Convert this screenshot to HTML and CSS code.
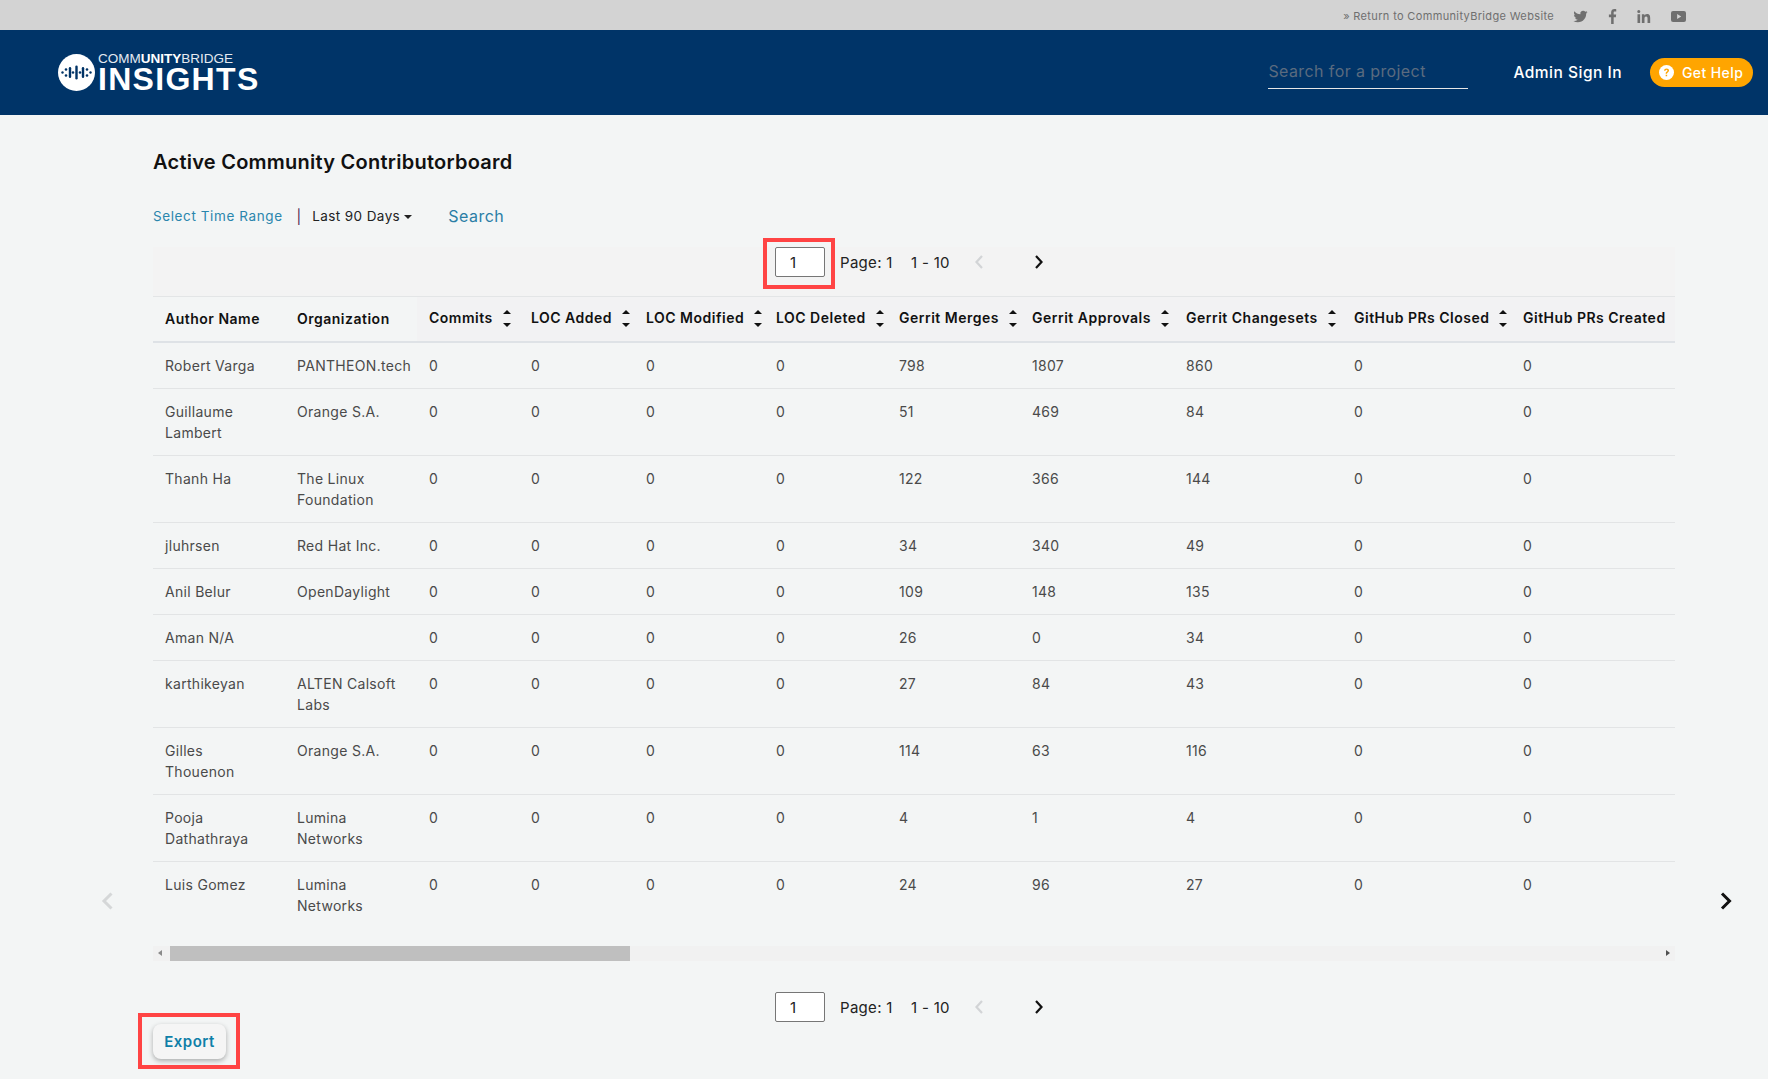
FILE: index.html
```html
<!DOCTYPE html>
<html lang="en">
<head>
  <meta charset="UTF-8" />
  <title>Active Community Contributorboard</title>
  <link rel="stylesheet" href="styles.css">
</head>
<body>
  <div class="topbar">
    <a class="return-link">» Return to CommunityBridge Website</a>
    <svg class="social" width="15" height="13" viewBox="0 0 24 22"><path d="M23.95 3.57a10 10 0 0 1-2.82.78 4.96 4.96 0 0 0 2.16-2.73c-.95.56-2 .96-3.13 1.19a4.92 4.92 0 0 0-8.38 4.48C7.69 7.1 4.07 5.13 1.64 2.16a4.82 4.82 0 0 0-.67 2.48c0 1.71.87 3.21 2.19 4.1a4.9 4.9 0 0 1-2.23-.62v.06a4.92 4.92 0 0 0 3.95 4.83 5 5 0 0 1-2.21.08 4.94 4.94 0 0 0 4.6 3.42A9.87 9.87 0 0 1 0 18.61 14 14 0 0 0 7.56 20.8c9.05 0 14-7.5 14-13.98 0-.21 0-.42-.02-.63a9.94 9.94 0 0 0 2.41-2.62z"/></svg>
    <svg class="social" width="9" height="15" viewBox="0 0 11 22"><path d="M7.2 22V12h3.2l.5-3.9H7.2V5.6c0-1.100.3-1.900 1.900-1.900H11V.2C10.7.1 9.600 0 8.300 0 5.500 0 3.500 1.700 3.500 4.900v3.200H.2V12h3.300v10z"/></svg>
    <svg class="social" width="14" height="13" viewBox="0 0 22 21"><path d="M2.600 0a2.500 2.500 0 1 1 0 5 2.500 2.500 0 0 1 0-5zM.5 7h4.300v14H.5zM7.500 7h4.100v1.900c.6-1.100 2-2.300 4.200-2.300 4.400 0 5.200 2.900 5.200 6.700V21h-4.300v-6.800c0-1.600 0-3.700-2.300-3.700s-2.600 1.800-2.600 3.600V21H7.500z"/></svg>
    <svg class="social" width="15" height="11" viewBox="0 0 22 16"><path fill-rule="evenodd" d="M3 0h16a3 3 0 0 1 3 3v10a3 3 0 0 1-3 3H3a3 3 0 0 1-3-3V3a3 3 0 0 1 3-3zm6 4.500v7l6-3.500z"/></svg>
  </div>

  <header class="site-header">
    <div class="logo">
      <svg class="logo-mark" width="37" height="37" viewBox="0 0 37 37">
        <circle cx="18.5" cy="18.5" r="18.5" fill="#fff"/>
        <g fill="#003366">
          <circle cx="4.500" cy="18.5" r="1.200"/>
          <circle cx="8" cy="15.500" r="1.300"/>
          <circle cx="8" cy="21.500" r="1.300"/>
          <rect x="10.800" y="13" width="2.400" height="11" rx="1.200"/>
          <circle cx="15" cy="18.500" r="1.300"/>
          <rect x="17.300" y="11.500" width="2.400" height="14" rx="1.200"/>
          <circle cx="22" cy="18.500" r="1.300"/>
          <rect x="23.800" y="13" width="2.400" height="11" rx="1.200"/>
          <circle cx="29" cy="15.500" r="1.300"/>
          <circle cx="29" cy="21.500" r="1.300"/>
          <circle cx="32.500" cy="18.500" r="1.200"/>
        </g>
      </svg>
      <div class="logo-text">
        <div class="logo-top">COMM<b>UNITY</b>BRIDGE</div>
        <div class="logo-main">INSIGHTS</div>
      </div>
    </div>
    <div class="header-right">
      <input class="project-search" type="text" placeholder="Search for a project">
      <a class="sign-in">Admin Sign In</a>
      <a class="help-btn">
        <svg width="15" height="15" viewBox="0 0 16 16"><circle cx="8" cy="8" r="8" fill="#fff"/><path d="M5.400 6.200c.1-1.600 1.200-2.500 2.700-2.500s2.600.9 2.600 2.200c0 1-.6 1.500-1.300 2-.6.4-.8.700-.8 1.300H7.100c0-1 .3-1.500 1-2 .6-.4.900-.7.900-1.200s-.4-.9-1-.9-1 .4-1.100 1.100z M7.100 10.400h1.600v1.700H7.100z" fill="#ffa500"/></svg>
        Get Help
      </a>
    </div>
  </header>

  <main class="content">
    <h1>Active Community Contributorboard</h1>

    <div class="filters">
      <span class="range-label">Select Time Range</span>
      <span class="divider">|</span>
      <span class="range-value">Last 90 Days<i class="caret"></i></span>
      <a class="search-link">Search</a>
    </div>

    <div class="pager pager-top">
      <span class="marked"><input class="page-input" type="text" value="1"></span>
      <span class="page-label">Page: 1</span>
      <span class="page-range">1 - 10</span>
      <svg class="pg-arrow off" width="12" height="16" viewBox="0 0 12 16"><path d="M9 2L3.500 8 9 14"/></svg>
      <svg class="pg-arrow" width="12" height="16" viewBox="0 0 12 16"><path d="M3 2l5.500 6L3 14"/></svg>
    </div>

    <div class="table-wrap">
      <table>
        <colgroup>
          <col class="c-author"><col class="c-org"><col class="c-commits"><col class="c-added"><col class="c-mod"><col class="c-del"><col class="c-merge"><col class="c-appr"><col class="c-change"><col class="c-closed"><col class="c-created">
        </colgroup>
        <thead>
          <tr>
            <th>Author Name</th>
            <th>Organization</th>
            <th class="shade">Commits<i class="sort"></i></th>
            <th class="shade">LOC Added<i class="sort"></i></th>
            <th class="shade">LOC Modified<i class="sort"></i></th>
            <th class="shade">LOC Deleted<i class="sort"></i></th>
            <th class="shade">Gerrit Merges<i class="sort"></i></th>
            <th class="shade">Gerrit Approvals<i class="sort"></i></th>
            <th class="shade">Gerrit Changesets<i class="sort"></i></th>
            <th class="shade">GitHub PRs Closed<i class="sort"></i></th>
            <th class="shade">GitHub PRs Created<i class="sort"></i></th>
          </tr>
        </thead>
        <tbody>
          <tr><td>Robert Varga</td><td>PANTHEON.tech</td><td>0</td><td>0</td><td>0</td><td>0</td><td>798</td><td>1807</td><td>860</td><td>0</td><td>0</td></tr>
          <tr><td>Guillaume Lambert</td><td>Orange S.A.</td><td>0</td><td>0</td><td>0</td><td>0</td><td>51</td><td>469</td><td>84</td><td>0</td><td>0</td></tr>
          <tr><td>Thanh Ha</td><td>The Linux Foundation</td><td>0</td><td>0</td><td>0</td><td>0</td><td>122</td><td>366</td><td>144</td><td>0</td><td>0</td></tr>
          <tr><td>jluhrsen</td><td>Red Hat Inc.</td><td>0</td><td>0</td><td>0</td><td>0</td><td>34</td><td>340</td><td>49</td><td>0</td><td>0</td></tr>
          <tr><td>Anil Belur</td><td>OpenDaylight</td><td>0</td><td>0</td><td>0</td><td>0</td><td>109</td><td>148</td><td>135</td><td>0</td><td>0</td></tr>
          <tr><td>Aman N/A</td><td></td><td>0</td><td>0</td><td>0</td><td>0</td><td>26</td><td>0</td><td>34</td><td>0</td><td>0</td></tr>
          <tr><td>karthikeyan</td><td>ALTEN Calsoft Labs</td><td>0</td><td>0</td><td>0</td><td>0</td><td>27</td><td>84</td><td>43</td><td>0</td><td>0</td></tr>
          <tr><td>Gilles Thouenon</td><td>Orange S.A.</td><td>0</td><td>0</td><td>0</td><td>0</td><td>114</td><td>63</td><td>116</td><td>0</td><td>0</td></tr>
          <tr><td>Pooja Dathathraya</td><td>Lumina Networks</td><td>0</td><td>0</td><td>0</td><td>0</td><td>4</td><td>1</td><td>4</td><td>0</td><td>0</td></tr>
          <tr><td>Luis Gomez</td><td>Lumina Networks</td><td>0</td><td>0</td><td>0</td><td>0</td><td>24</td><td>96</td><td>27</td><td>0</td><td>0</td></tr>
        </tbody>
      </table>
    </div>

    <div class="fake-scroll">
      <i class="sb-left"></i>
      <div class="sb-thumb"></div>
      <i class="sb-right"></i>
    </div>

    <div class="pager pager-bottom">
      <input class="page-input" type="text" value="1">
      <span class="page-label">Page: 1</span>
      <span class="page-range">1 - 10</span>
      <svg class="pg-arrow off" width="12" height="16" viewBox="0 0 12 16"><path d="M9 2L3.500 8 9 14"/></svg>
      <svg class="pg-arrow" width="12" height="16" viewBox="0 0 12 16"><path d="M3 2l5.500 6L3 14"/></svg>
    </div>

    <div class="export-row">
      <span class="marked export-mark"><button class="export-btn">Export</button></span>
    </div>
  </main>

  <svg class="side-arrow side-prev" width="14" height="20" viewBox="0 0 14 20"><path d="M10.500 2.500L3 10l7.500 7.500"/></svg>
  <svg class="side-arrow side-next" width="14" height="20" viewBox="0 0 14 20"><path d="M3 2.500l7.500 7.500L3 17.500"/></svg>
</body>
</html>
```

FILE: styles.css
```css
body {
  margin: 0;
  background: #f3f5f5;
  color: #222;
  font-family: Inter, "Open Sans", sans-serif;
  font-size: 14px;
  position: relative;
  min-height: 1079px;
  overflow: hidden;
}
.topbar {
  height: 30px;
  background: #d3d3d3;
  display: flex;
  align-items: center;
  justify-content: flex-end;
  padding: 2px 82px 0 0;
  gap: 20px;
  box-sizing: border-box;
}
.return-link {
  font-size: 11px;
  letter-spacing: 0.35px;
  color: #6f6f6f;
  margin-right: -1px;
}
.social { fill: #6f6f6f; }

.site-header {
  height: 85px;
  background: #003468;
  display: flex;
  align-items: center;
  justify-content: space-between;
  padding: 0 15px 0 58px;
}
.logo { display: flex; align-items: center; gap: 3px; font-family: "Liberation Sans", Arial, sans-serif; color: #fff; }
.logo-mark { display: block; margin-top: -1px; }
.logo-top { font-size: 13.5px; line-height: 14px; color: #e4eaf1; }
.logo-top b { color: #fff; }
.logo-main { font-size: 32px; line-height: 27px; font-weight: 700; letter-spacing: 1.3px; }

.header-right { display: flex; align-items: center; }
.project-search {
  width: 200px;
  height: 34px;
  box-sizing: border-box;
  background: transparent;
  border: 0;
  border-bottom: 1px solid #e6e6e6;
  color: #fff;
  font: 16px Inter, sans-serif;
  letter-spacing: 0.4px;
  padding: 0 0 2px;
  margin-right: 45px;
  margin-top: -1px;
  outline: none;
}
.project-search::placeholder { color: #5b6b7f; opacity: 1; }
.sign-in { color: #fff; font-size: 15.5px; font-weight: 500; letter-spacing: 0.5px; margin-right: 28px; }
.help-btn {
  display: flex;
  align-items: center;
  gap: 8px;
  height: 29px;
  width: 103px;
  box-sizing: border-box;
  padding-left: 9px;
  background: #ffa500;
  border-radius: 15px;
  color: #fff;
  font-size: 14px;
  font-weight: 500;
  letter-spacing: 0.4px;
}

.content { padding: 0 93px 0 153px; }
h1 {
  margin: 0;
  padding-top: 34px;
  font-size: 20px;
  line-height: 26px;
  font-weight: 600;
  letter-spacing: 0.25px;
  color: #111;
}
.filters {
  display: flex;
  align-items: center;
  height: 24px;
  margin-top: 29px;
}
.range-label { color: #2a86ad; font-size: 13.5px; letter-spacing: 0.6px; }
.divider { color: #4a2050; margin: 0 11px 0 14px; }
.range-value { color: #222; font-size: 13.5px; letter-spacing: 0.4px; }
.caret {
  display: inline-block;
  margin-left: 4px;
  vertical-align: 2px;
  border-top: 4px solid #222;
  border-left: 4px solid transparent;
  border-right: 4px solid transparent;
}
.search-link { color: #2a7ea6; font-size: 16px; letter-spacing: 0.5px; margin-left: 36px; }

.pager {
  display: flex;
  align-items: center;
  height: 30px;
  padding-left: 622px;
  color: #222;
  font-size: 15px;
  letter-spacing: 0.3px;
}
.pager-top { margin-top: 19px; padding-bottom: 19px; background: #f3f3f3; }
.pager-bottom { margin-top: 31px; }
.page-input {
  width: 50px;
  height: 30px;
  box-sizing: border-box;
  border: 1px solid #767676;
  border-radius: 2px;
  background: #fff;
  font: 15px Inter, sans-serif;
  color: #222;
  padding: 0 0 0 14px;
  margin: 0;
}
.page-label { margin-left: 15px; width: 71px; white-space: nowrap; }
.page-range { width: 62px; white-space: nowrap; }
.pg-arrow { fill: none; stroke: #111; stroke-width: 2.2px; margin-right: 48px; }
.pg-arrow.off { stroke: #d2d4d6; }

/* red highlight boxes sit over the controls */
.marked { position: relative; display: inline-block; }
.marked::after {
  content: "";
  position: absolute;
  pointer-events: none;
  border: 4px solid #ff4444;
}
.pager-top .marked { height: 30px; }
.pager-top .marked::after { left: -12px; top: -9px; width: 64px; height: 43px; }

.table-wrap { overflow: hidden; width: 1522px; border-top: 1px solid #e3e5e6; }
table { border-collapse: collapse; table-layout: fixed; width: 1522px; }
.c-author { width: 132px; }
.c-org { width: 132px; }
.c-commits { width: 102px; }
.c-added { width: 115px; }
.c-mod { width: 130px; }
.c-del { width: 123px; }
.c-merge { width: 133px; }
.c-appr { width: 154px; }
.c-change { width: 168px; }
.c-closed { width: 169px; }
.c-created { width: 164px; }
th {
  height: 42px;
  padding: 0 0 2px 12px;
  text-align: left;
  font-size: 14px;
  font-weight: 600;
  letter-spacing: 0.5px;
  color: #111;
  white-space: nowrap;
  border-bottom: 2px solid #dee2e6;
}
th.shade { background: #f2f2f3; }
td {
  padding: 12px;
  vertical-align: top;
  line-height: 21px;
  font-size: 14px;
  letter-spacing: 0.3px;
  color: #4a4a4a;
  border-bottom: 1px solid #e2e4e5;
}
tbody tr:last-child td { border-bottom: 0; padding-bottom: 30px; }
.sort {
  display: inline-block;
  position: relative;
  width: 9px;
  height: 17px;
  margin-left: 10px;
  vertical-align: middle;
}
.sort::before, .sort::after {
  content: "";
  position: absolute;
  left: 0;
  border-left: 4.5px solid transparent;
  border-right: 4.5px solid transparent;
}
.sort::before { top: 0; border-bottom: 4.5px solid #111; }
.sort::after { bottom: 0; border-top: 4.5px solid #111; }

.fake-scroll {
  display: flex;
  align-items: center;
  height: 15px;
  width: 1522px;
  background: #f1f1f1;
  position: relative;
}
.sb-thumb { width: 460px; height: 15px; background: #bfbfbf; margin-left: 17px; }
.sb-left, .sb-right { position: absolute; top: 4px; border-top: 3.5px solid transparent; border-bottom: 3.5px solid transparent; }
.sb-left { left: 5px; border-right: 4px solid #8a8a8a; }
.sb-right { right: 5px; border-left: 4px solid #505050; }

.export-row { margin-top: 2px; }
.export-mark { display: block; width: 73px; height: 35px; }
.export-mark::after { left: -15px; top: -11px; width: 94px; height: 48px; }
.export-btn {
  display: block;
  width: 73px;
  height: 35px;
  padding: 0;
  border: 0;
  border-radius: 8px;
  background: #f5f5f5;
  box-shadow: 0 2px 5px rgba(0,0,0,0.3);
  color: #0f7fa8;
  font: 600 15px Inter, sans-serif;
  letter-spacing: 0.5px;
}

.side-arrow { position: absolute; top: 891px; fill: none; stroke-width: 3px; }
.side-prev { left: 101px; stroke: #d5d7d8; }
.side-next { left: 1719px; stroke: #111; }
```
